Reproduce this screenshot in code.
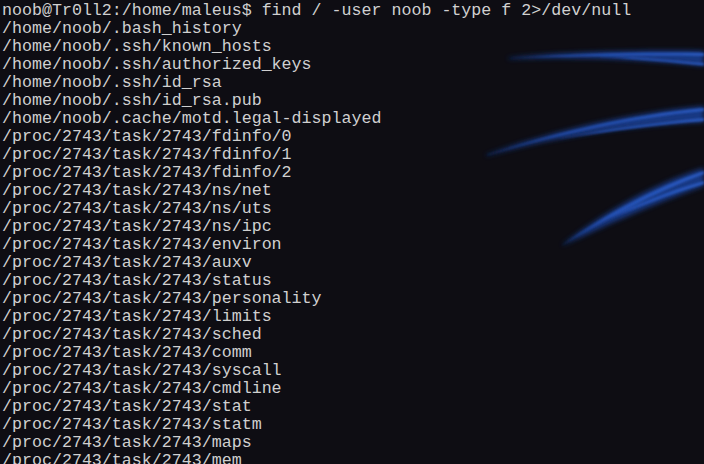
import React from "react";

const lines = [
  "noob@Tr0ll2:/home/maleus$ find / -user noob -type f 2>/dev/null",
  "/home/noob/.bash_history",
  "/home/noob/.ssh/known_hosts",
  "/home/noob/.ssh/authorized_keys",
  "/home/noob/.ssh/id_rsa",
  "/home/noob/.ssh/id_rsa.pub",
  "/home/noob/.cache/motd.legal-displayed",
  "/proc/2743/task/2743/fdinfo/0",
  "/proc/2743/task/2743/fdinfo/1",
  "/proc/2743/task/2743/fdinfo/2",
  "/proc/2743/task/2743/ns/net",
  "/proc/2743/task/2743/ns/uts",
  "/proc/2743/task/2743/ns/ipc",
  "/proc/2743/task/2743/environ",
  "/proc/2743/task/2743/auxv",
  "/proc/2743/task/2743/status",
  "/proc/2743/task/2743/personality",
  "/proc/2743/task/2743/limits",
  "/proc/2743/task/2743/sched",
  "/proc/2743/task/2743/comm",
  "/proc/2743/task/2743/syscall",
  "/proc/2743/task/2743/cmdline",
  "/proc/2743/task/2743/stat",
  "/proc/2743/task/2743/statm",
  "/proc/2743/task/2743/maps",
  "/proc/2743/task/2743/mem",
];

function Swooshes() {
  return (
    <svg
      className="absolute inset-0 pointer-events-none"
      width="704"
      height="464"
      viewBox="0 0 704 464"
    >
      <defs>
        <filter id="glow" x="-20%" y="-50%" width="140%" height="200%">
          <feGaussianBlur stdDeviation="2.5" />
        </filter>
        <filter id="soft" x="-20%" y="-50%" width="140%" height="200%">
          <feGaussianBlur stdDeviation="0.8" />
        </filter>
        <linearGradient id="g1" x1="0" y1="0" x2="1" y2="0">
          <stop offset="0" stopColor="#1a3f90" stopOpacity="0.5" />
          <stop offset="0.3" stopColor="#2653b8" />
          <stop offset="1" stopColor="#2a5cc4" />
        </linearGradient>
      </defs>
      {/* streak 1 */}
      <g filter="url(#glow)" opacity="0.75">
        <path d="M508 58 C560 52 640 50 704 51 L704 66 C650 60 580 56 508 59 Z" fill="#1a46a8" />
      </g>
      <g filter="url(#soft)" opacity="0.9">
        <path d="M510 58 C570 54 640 52 704 53 L704 56 C640 55 570 56 510 58.5 Z" fill="url(#g1)" />
        <path d="M600 56 C640 57 670 60 704 63 L704 65.5 C670 62 640 59 600 57 Z" fill="url(#g1)" />
      </g>
      {/* streak 2 */}
      <g filter="url(#glow)" opacity="0.75">
        <path d="M486 155 C540 135 620 114 704 106 L704 122 C620 126 540 140 486 156 Z" fill="#1a46a8" />
      </g>
      <g filter="url(#soft)" opacity="0.9">
        <path d="M487 154.5 C540 138 620 116 704 108 L704 111 C620 119 545 138 487 155.5 Z" fill="url(#g1)" />
        <path d="M560 138 C610 128 660 122 704 118 L704 121 C660 124 610 131 560 139 Z" fill="url(#g1)" />
      </g>
      {/* streak 3 */}
      <g filter="url(#glow)" opacity="0.75">
        <path d="M561 246 C600 215 650 185 704 168 L704 186 C650 205 600 228 561 246 Z" fill="#1a46a8" />
      </g>
      <g filter="url(#soft)" opacity="0.9">
        <path d="M562 245 C605 215 655 187 704 171 L704 174 C655 192 605 220 562 245.5 Z" fill="url(#g1)" />
        <path d="M600 222 C635 205 670 190 704 181 L704 184 C670 194 635 208 600 223 Z" fill="url(#g1)" />
      </g>
    </svg>
  );
}

export default function App() {
  return (
    <div className="relative w-[704px] h-[464px] overflow-hidden bg-[#0e0d13]">
      <Swooshes />
      <div
        className="relative pl-[2px] pt-[2px] text-[16.65px] leading-[18px] text-[#d0d0d0] whitespace-pre"
        style={{ fontFamily: '"Liberation Mono", monospace' }}
      >
        {lines.map((l, i) => (
          <div key={i}>{l}</div>
        ))}
      </div>
    </div>
  );
}
